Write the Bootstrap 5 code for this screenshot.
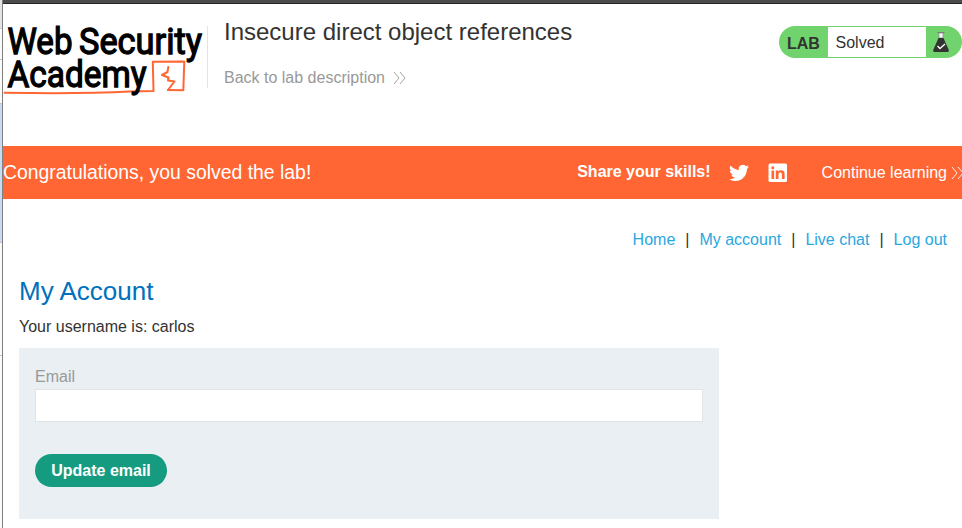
<!DOCTYPE html>
<html lang="en">
<head>
<meta charset="utf-8">
<meta name="viewport" content="width=device-width, initial-scale=1">
<title>Insecure direct object references</title>
<link href="https://cdn.jsdelivr.net/npm/bootstrap@5.3.0/dist/css/bootstrap.min.css" rel="stylesheet">
<style>
body{font-family:"Liberation Sans",Arial,sans-serif;font-size:16px;line-height:20px;color:#333332;background:#fff;height:528px}
a{text-decoration:none}
.edge{width:3px;border-right:1px solid #808080;background:#fafafa}
.edge div{border-bottom:1px solid #c8c8c8}
.edge .e1{height:29px;background:#e3e3e3}
.edge .e2{height:31px}
.edge .e3{height:44px}
.edge .e4{height:139px;background:#c9daf3}
.edge .e5{height:113px}
.topline{height:4px;background:#4b4b4b;border-bottom:1px solid #252525}
.lab-header{height:142px;padding-top:22px}
.logo{width:204px;height:84px;margin-top:-12px}
.title-block{height:62px;padding-left:16px;border-left:1px solid #e4e4e4}
.title-block h2{font-size:24px;line-height:28px;margin:-8px 0 22px}
.back{color:#999}
.status{width:183px;height:32px;border-radius:16px;background:#70d36d;padding:1px 0}
.status-label{width:49px;padding:3px 0 0 8px}
.status-text{width:98px;padding:2px 0 0 7.5px}
.banner{height:53px;background:#ff6633}
.banner h4{font-size:19.4px;line-height:24px;padding-bottom:1px}
.share{padding-bottom:2px}
.next-link{margin-right:-1px}
.links{height:82px;padding:31px 15px 0 0}
.links a{color:#29a7df}
.sep{padding:0 10px}
.account{padding:0 16px}
.account h1{font-size:26px;line-height:30px;color:#0071bc;margin:-5px 0 11px}
.account p{padding-bottom:11px}
.email-form{width:700px;height:171px;background:#e9eff2;padding:19px 16px 0}
.email-form label{color:#999;line-height:20px;margin-bottom:2px}
.email-form .form-control{height:33px;border:1px solid #e0e4e4}
.update{width:132px;height:33px;background:#159c80;font-size:16px;line-height:20px;margin-top:32px}
</style>
<script src="https://cdn.jsdelivr.net/npm/bootstrap@5.3.0/dist/js/bootstrap.bundle.min.js"></script>
</head>
<body class="d-flex overflow-hidden">
<aside class="edge flex-shrink-0"><div class="e1"></div><div class="e2"></div><div class="e3"></div><div class="e4"></div><div class="e5"></div></aside>
<div class="flex-grow-1">
  <div class="topline"></div>
  <header class="lab-header d-flex align-items-start">
    <svg class="logo flex-shrink-0" viewBox="3 14 204 84">
      <g fill="none" stroke="#ff6633" stroke-linejoin="round" stroke-linecap="round">
        <path d="M4.500 92.700Q80 94 130 91.600L153.500 91L152.800 61.800L184.300 61.500L183.300 90.300L168 90" stroke-width="2"/>
        <path d="M168.300 67L167.500 72L162 75L168.500 77.500L168 80.500L174.500 81.500L168 90" stroke-width="2"/>
      </g>
      <g font-family="Roboto,sans-serif" font-weight="400" font-size="37" fill="#000" stroke="#000" stroke-width="1.300">
        <text x="7.500" y="54" textLength="65" lengthAdjust="spacingAndGlyphs">Web</text>
        <text x="79" y="54" textLength="123" lengthAdjust="spacingAndGlyphs">Security</text>
        <text x="7.500" y="87" textLength="139" lengthAdjust="spacingAndGlyphs">Academy</text>
      </g>
    </svg>
    <div class="title-block">
      <h2 class="fw-normal">Insecure direct object references</h2>
      <a href="#" class="back d-flex align-items-center">Back to lab description
        <svg class="ms-2" width="14" height="14" fill="none" stroke="#999" stroke-width=".9"><path d="M1 1l5 6-5 6M7 1l5 6-5 6"/></svg></a>
    </div>
    <div class="status d-flex ms-auto">
      <div class="status-label d-flex align-items-center fw-bold">LAB</div>
      <div class="status-text d-flex align-items-center bg-white">Solved</div>
      <svg width="36" height="30" viewBox="0 0 36 30"><path d="M11.500 5.500h7" stroke="#777"/><path d="M13 6h4v5h-4z" fill="#fff" stroke="#888" stroke-width=".7"/><path d="M12.500 11h5l5.300 12q.5 2-1.300 2h-13q-1.800 0-1.300-2z" fill="#333332"/><path d="M11.500 19l2.500 2.500 5-4.500" fill="none" stroke="#fff" stroke-width="1.300"/></svg>
    </div>
  </header>
  <section class="banner d-flex align-items-center text-white">
    <h4 class="fw-normal mb-0 me-auto">Congratulations, you solved the lab!</h4>
    <span class="share fw-bold">Share your skills!</span>
    <svg class="ms-3" width="24" height="24" viewBox="0 0 24 24" fill="#fff"><path d="M22 5.800c-.7.300-1.500.6-2.300.6.800-.5 1.500-1.300 1.800-2.200-.8.500-1.700.8-2.600 1a4.100 4.100 0 0 0-7 3.700c-3.400-.2-6.400-1.800-8.400-4.300a4.100 4.100 0 0 0 1.200 5.500c-.7 0-1.300-.2-1.800-.5 0 2 1.400 3.700 3.300 4.100-.6.200-1.200.2-1.900.1.500 1.600 2 2.800 3.800 2.800A8.300 8.300 0 0 1 2 18.300a11.600 11.600 0 0 0 6.300 1.800c7.500 0 11.600-6.200 11.600-11.600v-.6c.8-.5 1.500-1.300 2.100-2.100z"/></svg>
    <svg class="ms-3" width="23" height="24" viewBox="0 0 23 24"><rect x="1.500" y="2.500" width="18.500" height="18.500" rx="1.500" fill="#fff"/><g fill="#ff6633"><circle cx="5.800" cy="6.700" r="1.500"/><path d="M4.500 9.500h2.600V18H4.500zM8.800 9.500h2.500v1.200c1.400-2.200 6.300-2 6.300 2V18h-2.700v-4.700c0-2.400-3.400-2.200-3.400 0V18H8.800z"/></g></svg>
    <a href="#" class="next-link text-white d-flex align-items-center ps-3 ms-3">Continue learning
      <svg class="ms-1" width="12" height="14" fill="none" stroke="#fff" stroke-width=".9"><path d="M1 1l5 6-5 6M7 1l5 6-5 6"/></svg></a>
  </section>
  <nav class="links d-flex justify-content-end">
    <a href="#">Home</a><span class="sep">|</span><a href="#">My account</a><span class="sep">|</span><a href="#">Live chat</a><span class="sep">|</span><a href="#">Log out</a>
  </nav>
  <main class="account">
    <h1 class="fw-normal">My Account</h1>
    <p class="mb-0">Your username is: carlos</p>
    <form class="email-form">
      <label for="email" class="d-block">Email</label>
      <input id="email" type="email" class="form-control rounded-0 bg-white">
      <button type="button" class="update btn rounded-pill border-0 p-0 text-white fw-bold">Update email</button>
    </form>
  </main>
</div>
</body>
</html>
